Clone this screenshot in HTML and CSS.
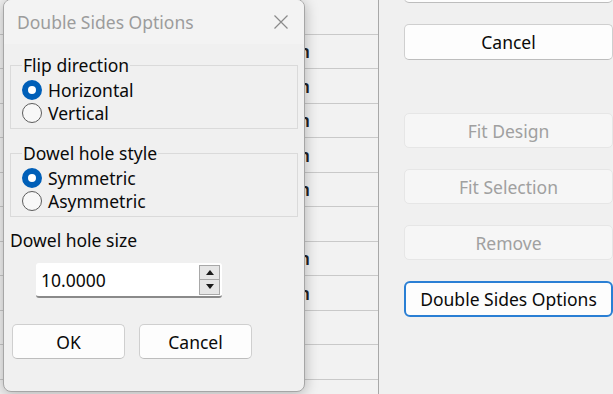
FILE: index.html
```html
<!DOCTYPE html>
<html lang="en">
<head>
    <meta charset="UTF-8">
    <title>Double Sides Options</title>
    <link rel="stylesheet" href="styles.css">
</head>
<body>
    <div class="app">
        <!-- Table behind the dialog -->
        <div class="grid">
            <div class="row"></div>
            <div class="row"><span class="cell">Design</span></div>
            <div class="row"><span class="cell">Design</span></div>
            <div class="row"><span class="cell">Design</span></div>
            <div class="row"><span class="cell">Design</span></div>
            <div class="row"><span class="cell">Design</span></div>
            <div class="row"></div>
            <div class="row"><span class="cell">Design</span></div>
            <div class="row"><span class="cell">Design</span></div>
            <div class="row"></div>
            <div class="row"></div>
            <div class="row"></div>
        </div>

        <!-- Right button column -->
        <div class="side">
            <button class="btn cut"></button>
            <button class="btn tall">Cancel</button>
            <button class="btn spaced" disabled>Fit Design</button>
            <button class="btn" disabled>Fit Selection</button>
            <button class="btn" disabled>Remove</button>
            <button class="btn focus tall">Double Sides Options</button>
        </div>

        <!-- Dialog window -->
        <div class="dialog">
            <div class="title-bar">
                <span class="title">Double Sides Options</span>
                <svg class="close" width="16" height="16" viewBox="0 0 16 16">
                    <path d="M1.5 1.5 L14.5 14.5 M14.5 1.5 L1.5 14.5" stroke="#8a8a8a" stroke-width="1.2" fill="none"/>
                </svg>
            </div>
            <div class="dialog-body">
                <fieldset class="group">
                    <legend>Flip direction</legend>
                    <div class="option"><span class="radio checked"></span>Horizontal</div>
                    <div class="option"><span class="radio"></span>Vertical</div>
                </fieldset>

                <fieldset class="group second">
                    <legend>Dowel hole style</legend>
                    <div class="option"><span class="radio checked"></span>Symmetric</div>
                    <div class="option"><span class="radio"></span>Asymmetric</div>
                </fieldset>

                <div class="field-label">Dowel hole size</div>
                <div class="spin">
                    <span class="spin-value">10.0000</span>
                    <div class="spin-buttons">
                        <span class="spin-up"></span>
                        <span class="spin-down"></span>
                    </div>
                </div>

                <div class="dialog-buttons">
                    <button class="btn small">OK</button>
                    <button class="btn small">Cancel</button>
                </div>
            </div>
        </div>
    </div>
</body>
</html>
```
FILE: styles.css
```css
body {
    margin: 0;
    background-color: #f0f0f0;
    font-family: "Noto Sans", "Open Sans", sans-serif;
    font-size: 17.5px;
    color: #0a0a0a;
    overflow: hidden;
}

.app {
    position: relative;
    display: flex;
    width: 613px;
    height: 394px;
    overflow: hidden;
}

.grid {
    width: 378px;
    border-right: 1px solid #a8a8a8;
    background-color: #f2f2f2;
}

.row {
    height: 33.5px;
    border-bottom: 1px solid #c9c9c9;
    display: flex;
    align-items: center;
}

.cell {
    width: 310px;
    text-align: right;
    font-weight: 600;
    color: #222;
}

.side {
    flex: 1;
    display: flex;
    flex-direction: column;
    gap: 21px;
    padding-left: 25px;
}

.btn {
    font-family: inherit;
    font-size: 17.5px;
    color: #0a0a0a;
    background-color: #fdfdfd;
    border: 1px solid #cfcfcf;
    border-bottom-color: #bdbdbd;
    border-radius: 5px;
    height: 35px;
    width: 209px;
    padding: 0;
}

.btn.tall {
    height: 36px;
}

.btn.cut {
    margin-top: -32px;
}

.btn.spaced {
    margin-top: 32px;
}

.btn:disabled {
    background-color: #f6f6f6;
    border-color: #e6e6e6;
    color: #a0a0a0;
}

.btn.focus {
    border: 2px solid #2a7fd4;
    border-radius: 6px;
}

.dialog {
    position: absolute;
    left: 3px;
    top: -1px;
    width: 300px;
    height: 391px;
    border: 1px solid #a6a6a6;
    border-radius: 8px;
    background-color: #f0f0f0;
    box-shadow: 0 2px 14px rgba(0, 0, 0, 0.28);
    overflow: hidden;
}

.title-bar {
    height: 44px;
    display: flex;
    align-items: center;
    justify-content: space-between;
    padding: 0 15px 0 13px;
    background-color: #f3f3f3;
}

.title {
    color: #9c9c9c;
}

.dialog-body {
    padding: 11px 6px 0 6px;
}

.group {
    margin: 0;
    padding: 3px 0 4px 11px;
    border: 1px solid #dadada;
}

.group legend {
    padding: 0 1px;
    line-height: 20px;
}

.group.second {
    margin-top: 14px;
}

.option {
    display: flex;
    align-items: center;
    height: 23px;
    gap: 6px;
}

.radio {
    width: 20px;
    height: 20px;
    border: 1.5px solid #5c5c5c;
    border-radius: 50%;
    box-sizing: border-box;
    background-color: #f8f8f8;
}

.radio.checked {
    border: 6.5px solid #005fb8;
    background-color: #ffffff;
}

.field-label {
    margin-top: 13px;
    line-height: 20px;
}

.spin {
    margin: 13px 0 0 26px;
    width: 186px;
    height: 35px;
    box-sizing: border-box;
    background-color: #ffffff;
    border-bottom: 2px solid #8a8a8a;
    border-radius: 3px;
    display: flex;
    align-items: center;
    justify-content: space-between;
    padding: 0 2px 0 5px;
}

.spin-buttons {
    width: 19px;
    height: 28px;
    display: flex;
    flex-direction: column;
    border: 1px solid #a8a8a8;
    background-color: #e6e6e6;
}

.spin-up,
.spin-down {
    flex: 1;
    display: flex;
    align-items: center;
    justify-content: center;
}

.spin-up {
    border-bottom: 1px solid #a8a8a8;
}

.spin-up::after {
    content: "";
    border: 4px solid transparent;
    border-bottom: 5px solid #1a1a1a;
    border-top: none;
}

.spin-down::after {
    content: "";
    border: 4px solid transparent;
    border-top: 5px solid #1a1a1a;
    border-bottom: none;
}

.dialog-buttons {
    display: flex;
    gap: 14px;
    margin: 26px 0 0 2px;
}

.btn.small {
    width: 113px;
    height: 35px;
}
```
